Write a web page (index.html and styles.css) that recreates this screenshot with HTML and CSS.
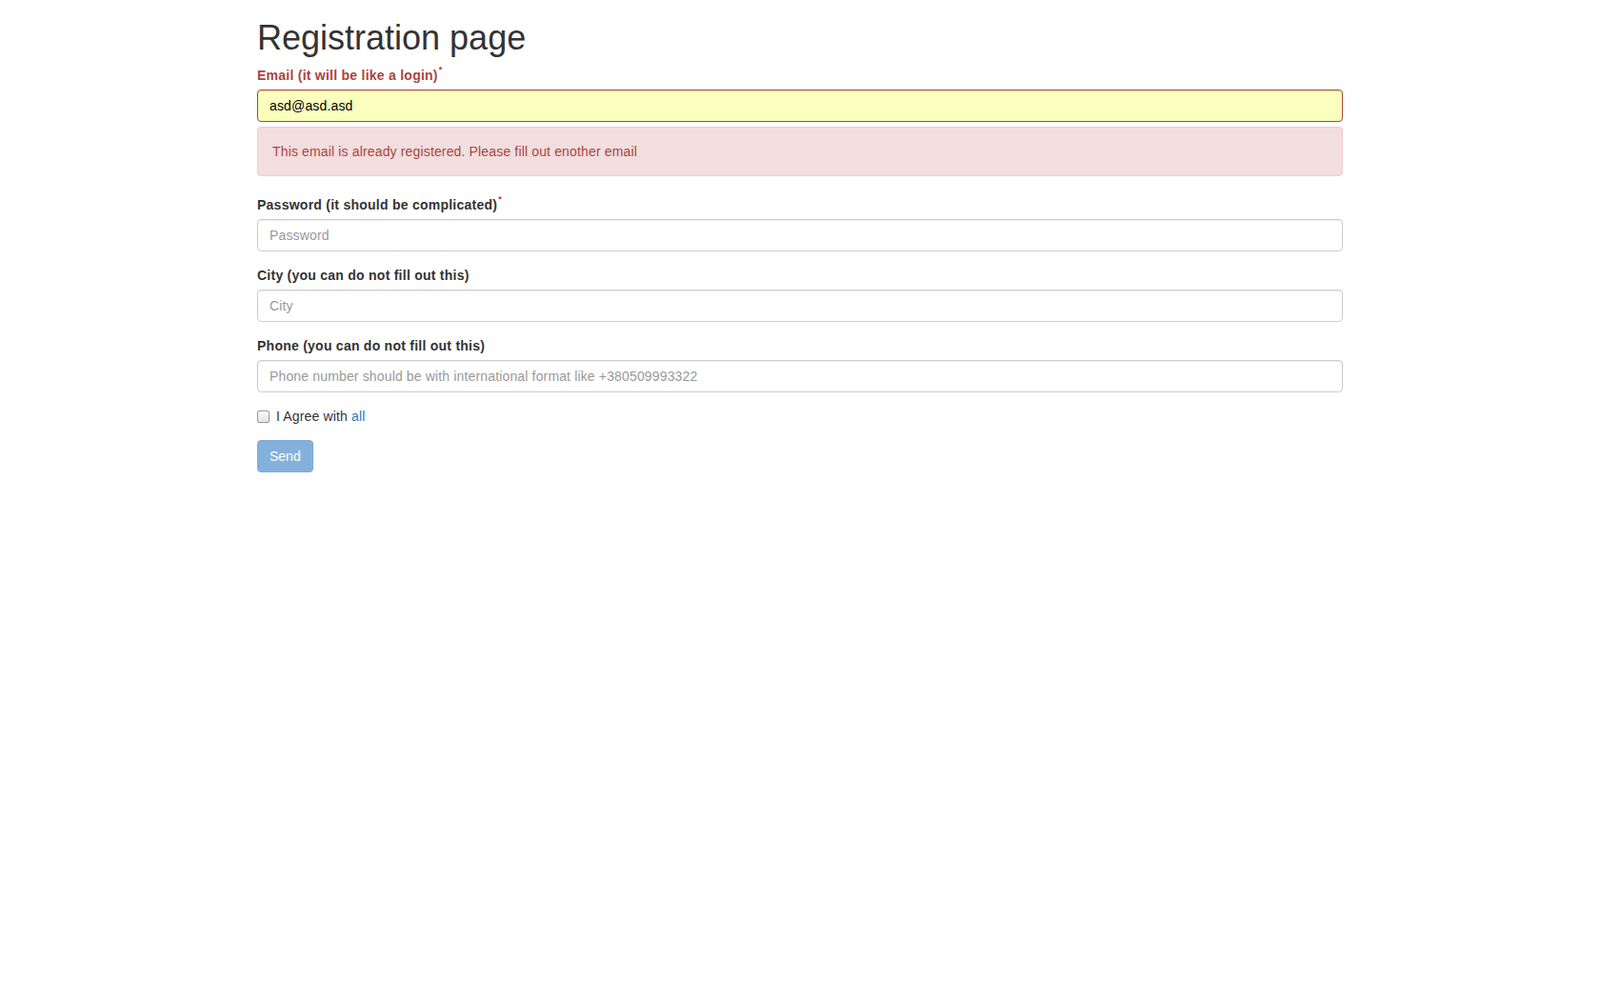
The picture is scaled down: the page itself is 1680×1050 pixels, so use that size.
FILE: index.html
```html
<!DOCTYPE html>
<html lang="en">
<head>
<meta charset="utf-8">
<title>Registration page</title>
<link rel="stylesheet" href="styles.css">
</head>
<body>
<div class="container">
  <h1 class="title">Registration page</h1>
  <form class="form">
    <div class="form-group has-error">
      <label class="control-label" for="email">Email (it will be like a login)<sup class="req">*</sup></label>
      <input class="form-control autofill" id="email" type="text" value="asd@asd.asd">
      <div class="alert alert-danger">This email is already registered. Please fill out enother email</div>
    </div>
    <div class="form-group">
      <label class="control-label" for="password">Password (it should be complicated)<sup class="req">*</sup></label>
      <input class="form-control" id="password" type="password" placeholder="Password">
    </div>
    <div class="form-group">
      <label class="control-label" for="city">City (you can do not fill out this)</label>
      <input class="form-control" id="city" type="text" placeholder="City">
    </div>
    <div class="form-group">
      <label class="control-label" for="phone">Phone (you can do not fill out this)</label>
      <input class="form-control" id="phone" type="text" placeholder="Phone number should be with international format like +380509993322">
    </div>
    <div class="form-group">
      <div class="checkbox">
        <label><span class="box"></span>I Agree with <a href="#" class="link">all</a></label>
      </div>
    </div>
    <button type="button" class="btn btn-primary" disabled>Send</button>
  </form>
</div>
</body>
</html>
```

FILE: styles.css
```css
* { box-sizing: border-box; }
html, body {
  margin: 0;
  padding: 0;
  background: #fff;
}
body {
  font-family: "Liberation Sans", Arial, Helvetica, sans-serif;
  font-size: 14px;
  line-height: 20px;
  color: #333;
  letter-spacing: 0.15px;
}
.container {
  width: 1170px;
  margin: 0 auto;
  padding: 0 15px;
}
.title {
  font-size: 36px;
  font-weight: 500;
  line-height: 1.1;
  margin: 20px 0 9px;
  color: #333;
  letter-spacing: 0;
}
.form { margin: 0; }
.form-group { margin-bottom: 15px; }
.control-label {
  display: inline-block;
  max-width: 100%;
  margin-bottom: 5px;
  font-weight: bold;
  color: #333;
  letter-spacing: 0.25px;
}
.req {
  color: #c9302c;
  font-size: 9px;
  line-height: 0;
  vertical-align: 8px;
  margin-left: 1px;
}
.form-control {
  display: block;
  width: 100%;
  height: 34px;
  padding: 6px 12px;
  font-family: "Liberation Sans", Arial, Helvetica, sans-serif;
  font-size: 14px;
  line-height: 20px;
  letter-spacing: 0.15px;
  color: #555;
  background: #fff;
  border: 1px solid #ccc;
  border-radius: 4px;
  box-shadow: inset 0 1px 1px rgba(0,0,0,.075);
  margin: 0;
}
.form-control::placeholder { color: #999; }
.has-error .control-label { color: #a94442; }
.has-error .form-control {
  border-color: #a94442;
  box-shadow: inset 0 1px 1px rgba(0,0,0,.075);
}
.form-control.autofill {
  background: #faffbd;
  color: #000;
}
.alert {
  margin-top: 5px;
  margin-bottom: 20px;
  padding: 15px;
  border: 1px solid transparent;
  border-radius: 4px;
}
.alert-danger {
  background: #f2dede;
  border-color: #ebccd1;
  color: #a94442;
}
.checkbox {
  display: block;
  min-height: 20px;
  margin: 10px 0;
}
.checkbox label {
  display: flex;
  align-items: flex-start;
  min-height: 20px;
  font-weight: normal;
  cursor: pointer;
}
.box {
  width: 13px;
  height: 13px;
  margin: 4px 7px 0 0;
  border: 1px solid #999;
  border-radius: 2px;
  background: linear-gradient(#fafafa, #e6e6e6);
  flex: none;
}
.link {
  color: #337ab7;
  text-decoration: none;
  margin-left: 4px;
}
.btn {
  display: inline-block;
  padding: 6px 12px;
  font-family: "Liberation Sans", Arial, Helvetica, sans-serif;
  font-size: 14px;
  font-weight: normal;
  line-height: 20px;
  border: 1px solid transparent;
  border-radius: 4px;
  margin: 0;
}
.btn-primary {
  color: #fff;
  background: #84b1db;
  border-color: #7eaad6;
}
.btn[disabled] {
  cursor: not-allowed;
}
```
